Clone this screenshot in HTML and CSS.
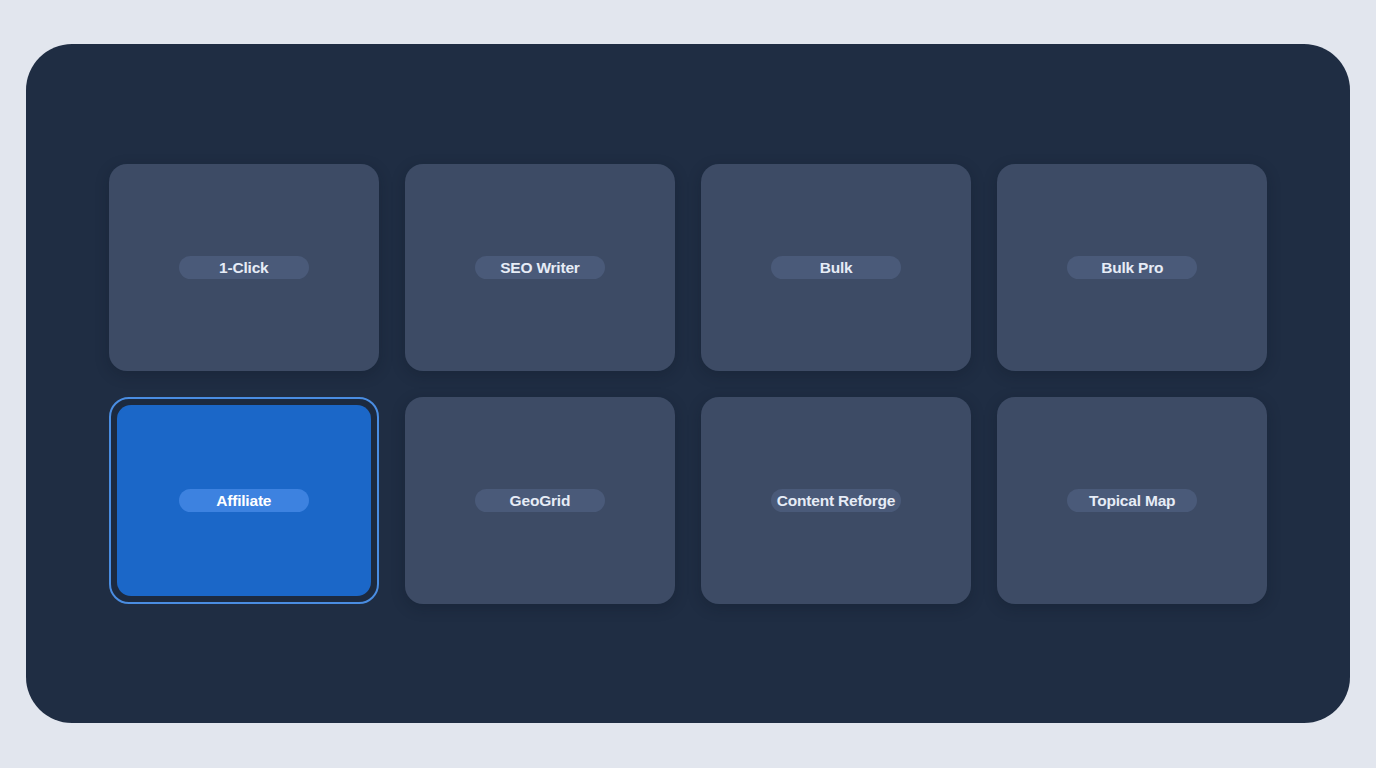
FILE: index.html
```html
<!DOCTYPE html>
<html>
<head>
<meta charset="utf-8">
<link rel="stylesheet" href="styles.css">
</head>
<body>
<main class="panel">
  <div class="grid">
    <div class="card"><span class="pill">1-Click</span></div>
    <div class="card"><span class="pill">SEO Writer</span></div>
    <div class="card"><span class="pill">Bulk</span></div>
    <div class="card"><span class="pill">Bulk Pro</span></div>
    <div class="card selected"><div class="inner"><span class="pill">Affiliate</span></div></div>
    <div class="card"><span class="pill">GeoGrid</span></div>
    <div class="card"><span class="pill">Content Reforge</span></div>
    <div class="card"><span class="pill">Topical Map</span></div>
  </div>
</main>
</body>
</html>
```
FILE: styles.css
```css
html, body {
  margin: 0;
  height: 100%;
}
body {
  background: #e2e6ee;
  padding: 44px 26px 45px;
  box-sizing: border-box;
  font-family: "Liberation Sans", Arial, sans-serif;
}
.panel {
  background: #1f2d43;
  border-radius: 46px;
  height: 100%;
  box-sizing: border-box;
  padding: 120px 83px;
  display: flex;
  align-items: center;
}
.grid {
  flex: 1;
  display: grid;
  grid-template-columns: repeat(4, 1fr);
  grid-template-rows: 207px 207px;
  column-gap: 26.6px;
  row-gap: 26px;
}
.card {
  background: #3d4b65;
  border-radius: 18px;
  display: flex;
  align-items: center;
  justify-content: center;
  box-shadow: 0 4px 14px rgba(10, 18, 32, 0.25);
  padding-top: 1px;
}
.pill {
  min-width: 130px;
  box-sizing: border-box;
  height: 23px;
  padding: 0 2px;
  border-radius: 12px;
  background: #4a5a79;
  color: #e6ecf6;
  font-size: 15.5px;
  font-weight: bold;
  display: inline-flex;
  align-items: center;
  justify-content: center;
  letter-spacing: -0.2px;
}
.card.selected {
  background: #1c2a40;
  border: 2px solid #4a8de2;
  border-radius: 20px;
  padding: 6px;
  align-items: stretch;
  justify-content: stretch;
  box-shadow: none;
}
.card.selected .inner {
  flex: 1;
  background: #1b67c8;
  border-radius: 14px;
  display: flex;
  align-items: center;
  justify-content: center;
  padding-top: 1px;
}
.card.selected .pill {
  background: #3d82e0;
  color: #ffffff;
}
```
